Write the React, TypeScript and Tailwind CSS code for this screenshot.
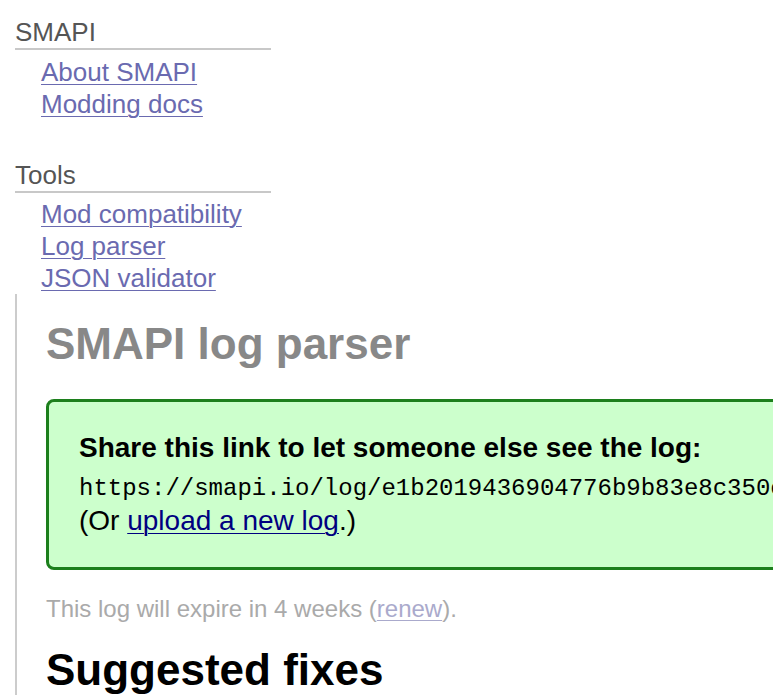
import React from "react";

const sans = { fontFamily: '"Liberation Sans", Arial, Helvetica, sans-serif' };

function MenuSection({ title, links, first }: { title: string; links: string[]; first?: boolean }) {
  return (
    <div className={first ? "pt-[16px]" : "pt-[39px]"}>
      <div className="w-[256px] border-b-2 border-[#c8c8c8] text-[26px] leading-[32px] text-[#555]">{title}</div>
      <ul className={first ? "mt-[6px] pl-[26px]" : "mt-[5px] pl-[26px]"}>
        {links.map((l) => (
          <li key={l} className="text-[26px] leading-[32px]">
            <a href="#" className="text-[#6a6ab0] underline decoration-1 underline-offset-[3px]">
              {l}
            </a>
          </li>
        ))}
      </ul>
    </div>
  );
}

export default function App() {
  return (
    <div className="w-[773px] h-[695px] overflow-hidden bg-white" style={sans}>
      <div className="pl-[15px]">
        <MenuSection first title="SMAPI" links={["About SMAPI", "Modding docs"]} />
        <MenuSection title="Tools" links={["Mod compatibility", "Log parser", "JSON validator"]} />
        <div className="border-l-2 border-[#cccccc] pl-[29px] pt-[25px] pb-[40px]">
          <h1 className="text-[44px] leading-[50px] font-bold text-[#888888] whitespace-nowrap">SMAPI log parser</h1>
          <div className="mt-[30px] w-max rounded-[8px] border-[3px] border-[#1c7f1c] bg-[#ccffcc] p-[30px]">
            <div className="text-[28px] leading-[32px] font-bold text-black mb-[9px] whitespace-nowrap">
              Share this link to let someone else see the log:
            </div>
            <div
              className="text-[24px] leading-[32px] text-black whitespace-nowrap"
              style={{ fontFamily: '"Liberation Mono", "Courier New", monospace' }}
            >
              https://smapi.io/log/e1b2019436904776b9b83e8c350e2a71
            </div>
            <div className="text-[28px] leading-[32px] text-black whitespace-nowrap">
              (Or{" "}
              <a href="#" className="text-[#000080] underline decoration-1 underline-offset-[3px]">
                upload a new log
              </a>
              .)
            </div>
          </div>
          <p className="mt-[23px] text-[24px] leading-[32px] text-[#aaaaaa] whitespace-nowrap">
            This log will expire in 4 weeks (
            <a href="#" className="text-[#aaaacc] underline decoration-1 underline-offset-[3px]">
              renew
            </a>
            ).
          </p>
          <h2 className="mt-[20px] text-[44px] leading-[50px] font-bold text-black whitespace-nowrap">Suggested fixes</h2>
        </div>
      </div>
    </div>
  );
}
